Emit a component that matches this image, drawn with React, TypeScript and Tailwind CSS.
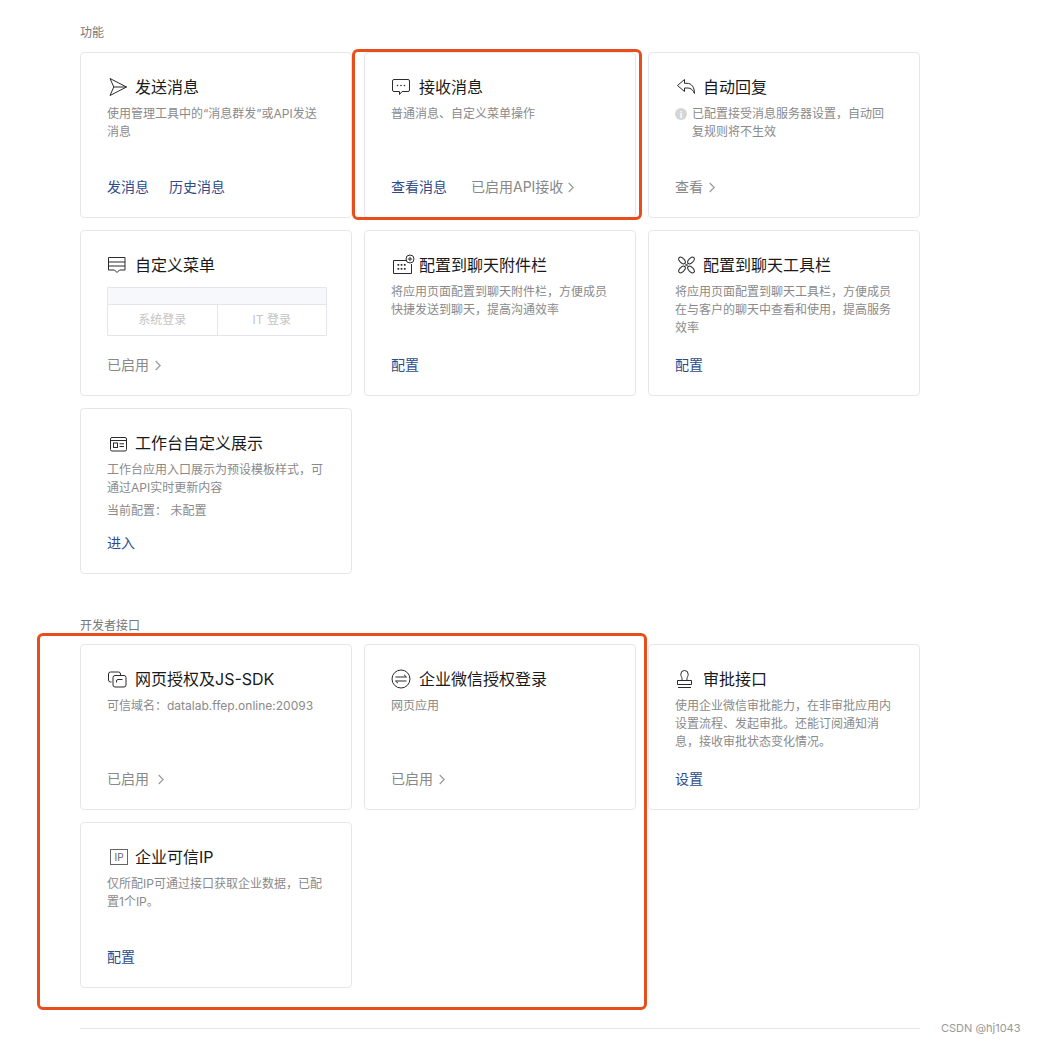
import type { ReactNode } from 'react'

const FONT = 'font-["Inter","Noto_Sans_CJK_SC",sans-serif]'

const stroke = { fill: 'none', stroke: '#2b2b2b', strokeWidth: 1 }

const SendIcon = () => (
  <svg width="20" height="20" viewBox="0 0 20 20" {...stroke}>
    <path d="M3 1.5 L19.5 10 L3 18.5 L6.8 10 Z M6.8 10 H19.5" strokeLinejoin="round" />
  </svg>
)

const ChatIcon = () => (
  <svg width="20" height="20" viewBox="0 0 20 20" {...stroke}>
    <path d="M3 2.5 H17 A1.5 1.5 0 0 1 18.5 4 V13 A1.5 1.5 0 0 1 17 14.5 H11 L8.5 17.5 V14.5 H3 A1.5 1.5 0 0 1 1.5 13 V4 A1.5 1.5 0 0 1 3 2.5 Z" />
    <circle cx="6.5" cy="8.5" r="0.8" fill="#2b2b2b" stroke="none" />
    <circle cx="10" cy="8.5" r="0.8" fill="#2b2b2b" stroke="none" />
    <circle cx="13.5" cy="8.5" r="0.8" fill="#2b2b2b" stroke="none" />
  </svg>
)

const ReplyIcon = () => (
  <svg width="20" height="20" viewBox="0 0 20 20" {...stroke}>
    <path d="M9.5 2.5 L2.5 8.5 L9.5 14.5 V11 H13 C16 11 18 13 19.5 16.5 C19.5 10 16.5 6.3 12 6.3 H9.5 Z" strokeLinejoin="round" />
  </svg>
)

const MenuIcon = () => (
  <svg width="20" height="20" viewBox="0 0 20 20" {...stroke}>
    <path d="M1.5 2.5 H18 V15 H12.5 L10 17.5 L7.5 15 H1.5 Z M1.5 7 H18 M1.5 11 H18" strokeLinejoin="round" />
  </svg>
)

const AttachIcon = () => (
  <svg width="24" height="22" viewBox="0 0 24 22" className="ml-1 shrink-0" {...stroke}>
    <path d="M15 6.5 H2.5 V19.5 H20.5 V10" />
    <circle cx="19" cy="5" r="4" />
    <path d="M19 2.8 V7.2 M16.8 5 H21.2" />
    <g fill="#2b2b2b" stroke="none">
      <rect x="6.5" y="10" width="1.7" height="1.7" />
      <rect x="9.7" y="10" width="1.7" height="1.7" />
      <rect x="12.9" y="10" width="1.7" height="1.7" />
      <rect x="6.5" y="14" width="1.7" height="1.7" />
      <rect x="9.7" y="14" width="1.7" height="1.7" />
      <rect x="12.9" y="14" width="1.7" height="1.7" />
    </g>
  </svg>
)

const ToolIcon = () => (
  <svg width="20" height="20" viewBox="0 0 20 20" {...stroke}>
    <ellipse cx="7" cy="5.5" rx="4" ry="2.3" transform="rotate(45 7 5.5)" />
    <ellipse cx="16" cy="5.5" rx="4" ry="2.3" transform="rotate(-45 16 5.5)" />
    <ellipse cx="7" cy="14.5" rx="4" ry="2.3" transform="rotate(-45 7 14.5)" />
    <ellipse cx="16" cy="14.5" rx="4" ry="2.3" transform="rotate(45 16 14.5)" />
    <path d="M9.8 8.3 L13.2 11.7 M13.2 8.3 L9.8 11.7" />
  </svg>
)

const CardIcon = () => (
  <svg width="20" height="20" viewBox="0 0 20 20" {...stroke}>
    <rect x="3.5" y="4.5" width="16" height="13.5" rx="1.5" />
    <path d="M3.5 7.5 H19.5" />
    <rect x="6.5" y="10" width="4" height="4.5" />
    <path d="M12.5 10.8 H17 M12.5 13.5 H17" />
  </svg>
)

const OverlapIcon = () => (
  <svg width="20" height="20" viewBox="0 0 20 20" {...stroke}>
    <path d="M4.5 13 H3.5 A2 2 0 0 1 1.5 11 V5 A2 2 0 0 1 3.5 3 H11.5 A2 2 0 0 1 13.5 5 V6" />
    <path d="M8 6.5 H17 A2 2 0 0 1 19 8.5 V16 A2 2 0 0 1 17 18 H8 A2 2 0 0 1 6 16 V8.5 A2 2 0 0 1 8 6.5 Z" />
    <path d="M9.5 13.5 V12 A1.5 1.5 0 0 1 11 10.5 H15.5" />
  </svg>
)

const SwapIcon = () => (
  <svg width="20" height="20" viewBox="0 0 20 20" {...stroke}>
    <circle cx="10" cy="10" r="9" />
    <path d="M4.5 8 H15.5 L13 5.8 M15.5 12 H4.5 L7 14.2" />
  </svg>
)

const StampIcon = () => (
  <svg width="20" height="20" viewBox="0 0 20 20" {...stroke}>
    <path d="M7 11.5 V9.5 C7 8 5.8 7.5 5.8 5.2 A3.7 3.7 0 0 1 13.2 5.2 C13.2 7.5 12 8 12 9.5 V11.5" />
    <path d="M2.5 11.5 H16.5 V15.5 H2.5 Z M3 18.5 H16" />
  </svg>
)

const IpIcon = () => (
  <span className="ml-1 flex h-4 w-[18px] shrink-0 items-center justify-center border border-[#666] text-[10px] leading-none text-[#666]">
    IP
  </span>
)

const Chevron = ({ className = '' }: { className?: string }) => (
  <svg width="6" height="11" viewBox="0 0 6 11" fill="none" stroke="#999" strokeWidth="1.2" className={className}>
    <path d="M0.7 1 L5.2 5.5 L0.7 10" />
  </svg>
)

function Link({ children }: { children: ReactNode }) {
  return <span className="text-[#2f4b8c]">{children}</span>
}

function Enabled({ children, gap = 'ml-[6px]' }: { children: ReactNode; gap?: string }) {
  return (
    <span className="flex items-center text-[#888]">
      {children}
      <Chevron className={gap} />
    </span>
  )
}

function Card({ icon, title, children, actions }: { icon: ReactNode; title: string; children?: ReactNode; actions: ReactNode }) {
  return (
    <div className="flex h-[166px] flex-col rounded border border-[#e5e6e8] bg-white pb-[19px] pl-[26px] pr-6 pt-[23px]">
      <div className="flex h-[22px] items-center text-base leading-[22px] text-[#1a1a1a]">
        <span className="mr-2 flex w-5 shrink-0 items-center justify-center">{icon}</span>
        <span className="whitespace-nowrap">{title}</span>
      </div>
      <div className="mt-[7px] text-xs leading-[18px] text-[#8a8a8a]">{children}</div>
      <div className="mt-auto flex h-[22px] items-center gap-5 text-sm leading-[22px]">{actions}</div>
    </div>
  )
}

export default function App() {
  return (
    <div className={`${FONT} relative h-[1044px] w-[1037px] overflow-hidden bg-white px-20 pt-[25px]`}>
      <div className="h-[16px] text-xs leading-[16px] text-[#777]">功能</div>
      <div className="mt-[11px] grid w-[840px] grid-cols-3 gap-3">
        <Card
          icon={<SendIcon />}
          title="发送消息"
          actions={
            <>
              <Link>发消息</Link>
              <Link>历史消息</Link>
            </>
          }
        >
          使用管理工具中的“消息群发”或API发送消息
        </Card>
        <Card
          icon={<ChatIcon />}
          title="接收消息"
          actions={
            <>
              <Link>查看消息</Link>
              <span className="ml-1">
                <Enabled gap="ml-[5px]">已启用API接收</Enabled>
              </span>
            </>
          }
        >
          普通消息、自定义菜单操作
        </Card>
        <Card icon={<ReplyIcon />} title="自动回复" actions={<Enabled>查看</Enabled>}>
          <div className="flex">
            <span className="mr-[5px] mt-[3px] flex h-3 w-3 shrink-0 items-center justify-center rounded-full bg-[#d5d5d5] text-[9px] font-bold leading-none text-white">
              i
            </span>
            <span>已配置接受消息服务器设置，自动回复规则将不生效</span>
          </div>
        </Card>

        <div className="flex h-[166px] flex-col rounded border border-[#e5e6e8] bg-white pb-[19px] pl-[26px] pr-6 pt-[23px]">
          <div className="flex h-[22px] items-center text-base leading-[22px] text-[#1a1a1a]">
            <span className="mr-2 flex w-5 shrink-0 items-center justify-center">
              <MenuIcon />
            </span>
            自定义菜单
          </div>
          <div className="mt-[11px] w-[220px] rounded-[1px] border border-[#e3e6ec]">
            <div className="h-[17px] border-b border-[#e3e6ec] bg-[#f7f8fb]" />
            <div className="flex h-[30px] text-xs leading-[30px] text-[#c4c4c4]">
              <span className="flex-1 border-r border-[#e3e6ec] text-center">系统登录</span>
              <span className="flex-1 text-center">IT 登录</span>
            </div>
          </div>
          <div className="mt-auto flex h-[22px] items-center text-sm leading-[22px]">
            <Enabled>已启用</Enabled>
          </div>
        </div>

        <Card icon={<AttachIcon />} title="配置到聊天附件栏" actions={<Link>配置</Link>}>
          将应用页面配置到聊天附件栏，方便成员快捷发送到聊天，提高沟通效率
        </Card>
        <Card icon={<ToolIcon />} title="配置到聊天工具栏" actions={<Link>配置</Link>}>
          将应用页面配置到聊天工具栏，方便成员在与客户的聊天中查看和使用，提高服务效率
        </Card>

        <Card icon={<CardIcon />} title="工作台自定义展示" actions={<Link>进入</Link>}>
          工作台应用入口展示为预设模板样式，可通过API实时更新内容
          <div className="mt-[5px]">当前配置： 未配置</div>
        </Card>
      </div>

      <div className="mt-[44px] h-[16px] text-xs leading-[16px] text-[#777]">开发者接口</div>
      <div className="mt-[10px] grid w-[840px] grid-cols-3 gap-3">
        <Card icon={<OverlapIcon />} title="网页授权及JS-SDK" actions={<Enabled gap="ml-[9px]">已启用</Enabled>}>
          可信域名：datalab.ffep.online:20093
        </Card>
        <Card icon={<SwapIcon />} title="企业微信授权登录" actions={<Enabled>已启用</Enabled>}>
          网页应用
        </Card>
        <Card icon={<StampIcon />} title="审批接口" actions={<Link>设置</Link>}>
          使用企业微信审批能力，在非审批应用内设置流程、发起审批。还能订阅通知消息，接收审批状态变化情况。
        </Card>
        <Card icon={<IpIcon />} title="企业可信IP" actions={<Link>配置</Link>}>
          仅所配IP可通过接口获取企业数据，已配置1个IP。
        </Card>
      </div>

      <div className="mt-10 h-px w-[840px] bg-[#e5e6e8]" />

      {/* annotation boxes drawn over the screenshot */}
      <div className="absolute left-[352px] top-[49px] h-[171px] w-[290px] rounded-md border-[3px] border-[#e84e1b]" />
      <div className="absolute left-[37px] top-[633px] h-[377px] w-[610px] rounded-md border-[3px] border-[#e84e1b]" />
      <div className="absolute left-[941px] top-[1021px] text-[11px] leading-[14px] text-[#999]">CSDN @hj1043</div>
    </div>
  )
}
